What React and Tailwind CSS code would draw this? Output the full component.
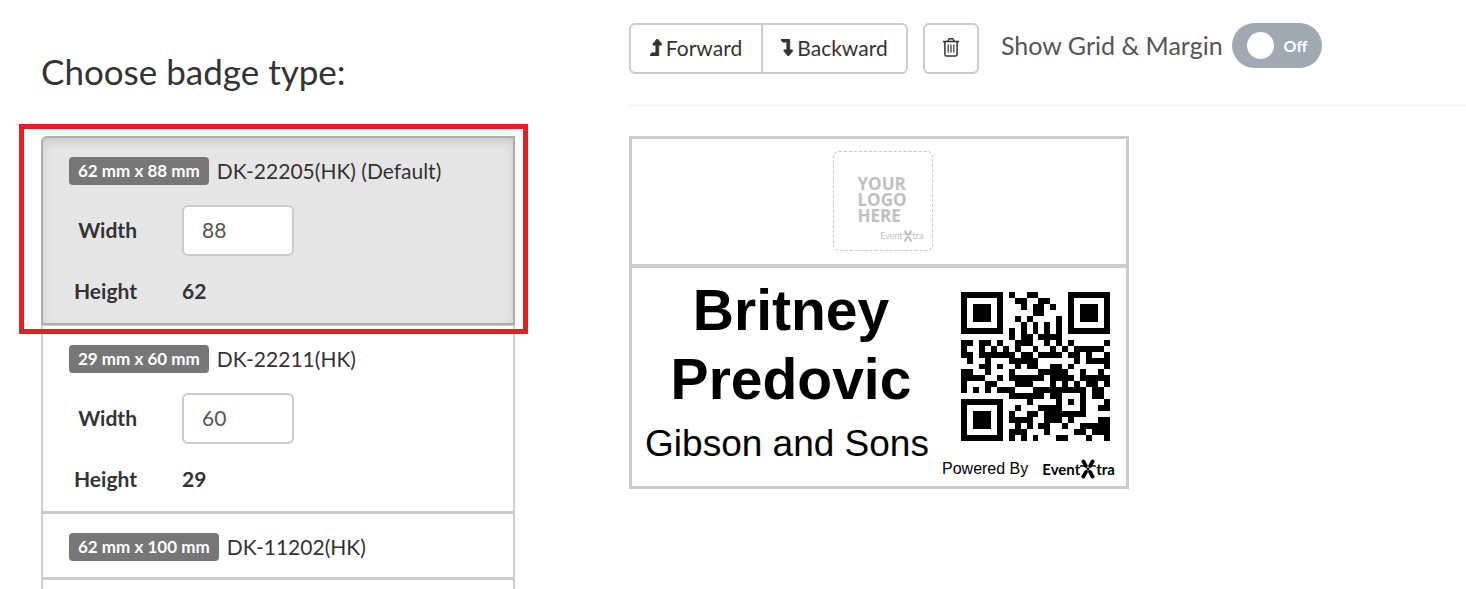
import React, { useState } from "react";

const QR_SIZE = 25;
const QR_FORMAT = "110110001000001";

// Galois-field product used by the Reed-Solomon remainder.
function gfMultiply(a, b) {
  let product = 0;
  for (let x = a, y = b; y > 0; y >>= 1) {
    if (y & 1) product ^= x;
    x = (x << 1) ^ (x & 0x80 ? 0x11d : 0);
  }
  return product;
}

function errorCodewords(data, count) {
  let generator = [1];
  let root = 1;
  for (let i = 0; i < count; i++) {
    const next = [...generator, 0];
    generator.forEach((value, k) => {
      next[k + 1] ^= gfMultiply(value, root);
    });
    generator = next;
    root = gfMultiply(root, 2);
  }
  const rest = [...data, ...Array(count).fill(0)];
  for (let i = 0; i < data.length; i++) {
    const factor = rest[i];
    generator.forEach((value, k) => {
      rest[i + k] ^= gfMultiply(value, factor);
    });
  }
  return rest.slice(data.length);
}

// Version 2, level L, mask 6, byte mode.
function qrMatrix(text) {
  const bin = (n, width) => n.toString(2).padStart(width, "0");
  const content =
    "0100" + bin(text.length, 8) + [...text].map((c) => bin(c.charCodeAt(0), 8)).join("") + "0000";
  const data = content.match(/.{8}/g).map((byte) => parseInt(byte, 2));
  for (let i = 0; data.length < 34; i++) data.push(i % 2 ? 0x11 : 0xec);
  const bits = [...data, ...errorCodewords(data, 10)].map((byte) => bin(byte, 8)).join("");

  const grid = Array.from({ length: QR_SIZE }, () => Array(QR_SIZE).fill(null));
  const finder = (row, col) => {
    for (let r = -1; r < 8; r++) {
      for (let c = -1; c < 8; c++) {
        if (grid[row + r] === undefined || grid[row + r][col + c] === undefined) continue;
        const ring = Math.max(Math.abs(r - 3), Math.abs(c - 3));
        grid[row + r][col + c] = ring !== 2 && ring < 4 ? 1 : 0;
      }
    }
  };
  finder(0, 0);
  finder(0, 18);
  finder(18, 0);
  for (let r = 16; r < 21; r++) {
    for (let c = 16; c < 21; c++) {
      grid[r][c] = Math.max(Math.abs(r - 18), Math.abs(c - 18)) === 1 ? 0 : 1;
    }
  }
  for (let i = 8; i < 17; i++) {
    grid[6][i] = (i + 1) % 2;
    grid[i][6] = (i + 1) % 2;
  }
  [...QR_FORMAT].forEach((bit, i) => {
    const value = Number(bit);
    if (i < 6) grid[8][i] = value;
    else if (i < 8) grid[8][i + 1] = value;
    else if (i === 8) grid[7][8] = value;
    else grid[14 - i][8] = value;
    if (i < 7) grid[24 - i][8] = value;
    else grid[8][10 + i] = value;
  });
  grid[17][8] = 1;

  let index = 0;
  let upward = true;
  for (let right = 24; right > 0; right -= 2) {
    if (right === 6) right = 5;
    for (let step = 0; step < QR_SIZE; step++) {
      const r = upward ? 24 - step : step;
      for (const c of [right, right - 1]) {
        if (grid[r][c] !== null) continue;
        const mask = (((r * c) % 2) + ((r * c) % 3)) % 2 === 0 ? 1 : 0;
        grid[r][c] = Number(bits[index] || 0) ^ mask;
        index++;
      }
    }
    upward = !upward;
  }
  return grid;
}

const qrPath = qrMatrix("https://www.eventxtra.com")
  .flatMap((row, y) => row.map((dark, x) => (dark ? `M${x} ${y}h1v1h-1z` : "")))
  .join("");

const badgeTypes = [
  { id: "dk22205", size: "62 mm x 88 mm", name: "DK-22205(HK) (Default)", width: 88, height: 62, active: true },
  { id: "dk22211", size: "29 mm x 60 mm", name: "DK-22211(HK)", width: 60, height: 29 },
  { id: "dk11202", size: "62 mm x 100 mm", name: "DK-11202(HK)" },
];

function LevelIcon({ down }) {
  return (
    <svg viewBox="32 460 1000 1410" className="h-[17px] w-3" fill="currentColor" aria-hidden="true">
      <g transform={down ? "translate(0 2330) scale(1 -1)" : undefined}>
        <path
          stroke="currentColor"
          strokeWidth="50"
          d="M1018 933q-18 37-58 37h-192v864q0 14-9 23t-23 9h-704q-21 0-29-18-8-20 4-35l160-192q9-11 25-11h320v-640h-192q-40 0-58-37-17-37 9-68l320-384q18-22 49-22t49 22l320 384q27 32 9 68z"
        />
      </g>
    </svg>
  );
}

function TrashIcon() {
  return (
    <svg viewBox="0 0 16 19" className="h-[19px] w-4" fill="none" stroke="currentColor" strokeWidth="1.5" aria-hidden="true">
      <path d="M0 3.6h16M4.8 3.4l.9-2.1q.2-.5.7-.5h3.2q.5 0 .7.5l.9 2.1M1.9 3.8v12.6q0 1.7 1.7 1.7h8.8q1.7 0 1.7-1.7V3.8" />
      <path strokeWidth="1.2" d="M5.2 6.6v8M8 6.6v8M10.8 6.6v8" />
    </svg>
  );
}

function CrossMark({ className }) {
  return (
    <svg viewBox="0 0 16 20" className={className} fill="none" stroke="currentColor" strokeLinecap="round" aria-hidden="true">
      <path strokeWidth="3.8" d="M3.4 2.4l2.4 4.4M12.6 2.4l-2.4 4.4M3.4 17.6l2.4-4.4M12.6 17.6l-2.4-4.4" />
      <path strokeWidth="2.2" strokeDasharray="0.2 2.6" d="M6 7.4l4.2 5.6M10 7.4L5.8 13" />
      <path strokeWidth="1.6" d="M.4 7h3M12.8 7h2.4" />
    </svg>
  );
}

function BadgeType({ type }) {
  const tone = type.active
    ? "z-10 rounded-tl-md border-[#adadad] bg-[#e6e6e6] shadow-[inset_0_4px_8px_rgba(0,0,0,0.125)]"
    : "border-[#ccc] bg-white";
  return (
    <li className={`relative -mt-px border-2 pt-[19px] pb-4 pl-[26px] ${tone}`}>
      {type.active && (
        <div className="pointer-events-none absolute -top-[14px] -right-[15px] -bottom-[11px] -left-6 border-[5px] border-[#e81e26]" />
      )}
      <div className="flex h-7 items-center gap-2">
        <span className="flex h-7 items-center rounded bg-[#777] px-[9px] text-[17px] font-bold text-white">{type.size}</span>
        <span className="text-[21px] leading-7">{type.name}</span>
      </div>
      {type.width && (
        <div className="mt-5 grid grid-cols-[68px_112px] gap-x-[45px] gap-y-[19px] text-[21px] font-bold">
          <label htmlFor={type.id} className="text-right leading-[49px]">Width</label>
          <input
            id={type.id}
            type="text"
            defaultValue={type.width}
            className="h-[51px] w-full rounded-md border-2 border-[#ccc] bg-white px-[18px] pb-0.5 font-normal text-[#555]"
          />
          <span className="text-right leading-8">Height</span>
          <span className="leading-8">{type.height}</span>
        </div>
      )}
    </li>
  );
}

function Toolbar() {
  const [grid, setGrid] = useState(false);
  const button = "flex h-[51px] items-center justify-center border-2 border-[#ccc] bg-white pb-0.5 text-[21px]";
  return (
    <div className="flex items-start border-b border-[#eee] pb-[31px]">
      <div className="flex">
        <button type="button" className={`${button} min-w-[134px] gap-1 rounded-l-md`}>
          <LevelIcon />
          Forward
        </button>
        <button type="button" className={`${button} -ml-0.5 min-w-[147px] gap-1 rounded-r-md`}>
          <LevelIcon down />
          Backward
        </button>
      </div>
      <button type="button" aria-label="Delete" className={`${button} ml-[15px] w-14 rounded-md`}>
        <TrashIcon />
      </button>
      <label className="ml-[22px] flex cursor-pointer items-center gap-[9px] text-[25px] text-[#555]">
        Show Grid &amp; Margin
        <input
          type="checkbox"
          role="switch"
          className="sr-only"
          checked={grid}
          onChange={() => setGrid(!grid)}
        />
        <span className="flex h-[45px] w-[90px] items-center gap-[10px] rounded-full bg-[#a1a9b3] pl-[15px] text-base font-bold text-white">
          <span className="size-[27px] rounded-full bg-white" />
          {grid ? "On" : "Off"}
        </span>
      </label>
    </div>
  );
}

function BadgePreview() {
  return (
    <div className="mt-[30px] w-[500px] border-[3px] border-[#ccc] bg-white font-['Liberation_Sans',sans-serif] text-black">
      <div className="flex justify-center border-b-4 border-[#ccc] pt-3 pb-[13px] pl-[7px]">
        <div className="flex size-[100px] flex-col items-center rounded-md border border-dashed border-[#c8c8c8] pt-6 text-[#c0c0c0]">
          <div className="w-[50px] font-['Open_Sans',sans-serif] text-[17px] leading-4 font-bold">
            YOUR
            <br />
            LOGO
            <br />
            HERE
          </div>
          <div className="mt-1.5 mr-2 flex items-center self-end font-['Lato',sans-serif] text-[9px] leading-3">
            Event
            <CrossMark className="h-3 w-2.5" />
            tra
          </div>
        </div>
      </div>
      <div className="flex">
        <div className="flex-1 pt-2 text-center">
          <div className="pr-7 pl-9 text-[57px] leading-[69px] font-bold">Britney Predovic</div>
          <div className="mt-2 text-[37px] leading-[44px] whitespace-nowrap">Gibson and Sons</div>
        </div>
        <div className="w-[184px] shrink-0 pt-6 pb-[7px]">
          <svg viewBox="0 0 25 25" className="ml-[19px] size-[149px]" role="img" aria-label="QR code">
            <path d={qrPath} shapeRendering="crispEdges" />
          </svg>
          <div className="mt-[18px] flex h-5 items-center text-base leading-5">
            Powered By
            <span className="ml-3.5 flex items-center font-['Lato',sans-serif] text-[15px] font-bold">
              Event
              <CrossMark className="h-5 w-4" />
              tra
            </span>
          </div>
        </div>
      </div>
    </div>
  );
}

export default function App() {
  return (
    <div className="grid min-h-screen grid-cols-[474px_1fr] gap-x-[114px] bg-white pl-[41px] font-['Lato',sans-serif] text-[#333]">
      <section className="flex flex-col pt-[51px]">
        <h1 className="mb-[46px] text-[35px] leading-10">Choose badge type:</h1>
        <ul className="flex flex-1 flex-col">
          {badgeTypes.map((type) => (
            <BadgeType key={type.id} type={type} />
          ))}
          <li className="-mt-px flex-1 border-2 border-b-0 border-[#ccc]" />
        </ul>
      </section>
      <main className="pt-[23px]">
        <Toolbar />
        <BadgePreview />
      </main>
    </div>
  );
}
